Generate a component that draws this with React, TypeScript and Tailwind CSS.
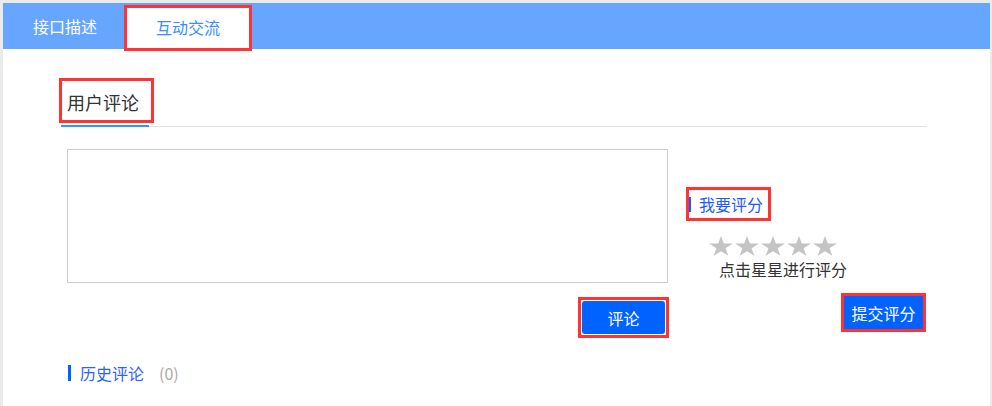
import React from 'react';

const font = { fontFamily: '"Noto Sans CJK SC", "Noto Sans", sans-serif' };

function Star() {
  return (
    <svg width="24" height="20" viewBox="0 0 24 23" preserveAspectRatio="none" className="shrink-0">
      <polygon
        fill="#c4c4c4"
        points="12,0 14.83,8.7 23.98,8.71 16.58,14.09 19.41,22.79 12,17.42 4.59,22.79 7.42,14.09 0.02,8.71 9.17,8.7"
      />
    </svg>
  );
}

export default function App() {
  return (
    <div className="w-[992px] h-[406px] bg-white overflow-hidden" style={font}>
      <div className="h-full border-l-[3px] border-t-[3px] border-r-[2px] border-[#ebebeb]">
        {/* Top tabs */}
        <div className="flex h-[46px] bg-[#66a6ff] overflow-visible">
          <div className="w-[121px] h-full flex items-center pl-[30px] text-[16px] text-white leading-none">
            接口描述
          </div>
          <div className="w-[128px] h-[46px] mt-[2px] bg-white border-[3px] border-[#ff3333] flex items-center justify-center text-[16px] text-[#3a8cff] leading-none">
            <span className="pb-[2px]">互动交流</span>
          </div>
        </div>

        <div className="pl-[58px] pr-[63px] pt-[29px]">
          {/* Section header */}
          <div className="flex border-b border-[#e2e2e2]">
            <div className="relative h-[49px] -mb-px border-b-2 border-[#1e9fff] pl-[6px] pr-[10px] flex items-center text-[18px] text-[#333] leading-6">
              用户评论
              <div className="absolute -left-[2px] -right-[5px] top-0 bottom-[2px] border-[3px] border-[#ff3333]" />
            </div>
          </div>

          <div className="flex mt-[22px]">
            {/* Comment input */}
            <div className="ml-[6px] w-[601px]">
              <div className="h-[134px] border border-[#cccccc] bg-white" />
              <div className="flex justify-end mt-[14px] -mr-px">
                <div className="border-[3px] border-[#ff3333] p-px">
                  <div className="w-[83px] h-[33px] rounded-[3px] bg-[#0063ff] flex items-center justify-center text-[16px] text-white leading-none">
                    评论
                  </div>
                </div>
              </div>
            </div>

            {/* Rating */}
            <div className="ml-[18px] pt-[38px]">
              <div className="w-[85px] h-[34px] border-[3px] border-[#ff3333] flex items-center">
                <div className="w-[2px] h-[15px] bg-[#1e5bff]" />
                <span className="ml-[8px] text-[16px] text-[#1e5bff] leading-none">我要评分</span>
              </div>
              <div className="ml-[23px] mt-[15px] flex gap-[2px]">
                <Star />
                <Star />
                <Star />
                <Star />
                <Star />
              </div>
              <div className="ml-[33px] mt-[3px] text-[16px] leading-5 text-[#333]">点击星星进行评分</div>
              <div className="ml-[155px] mt-[14px] w-[85px] border-[3px] border-[#ff3333]">
                <div className="h-[33px] bg-[#0063ff] flex items-center justify-center text-[16px] text-white leading-none">
                  提交评分
                </div>
              </div>
            </div>
          </div>

          {/* History */}
          <div className="flex items-center ml-[7px] mt-[25px] h-[20px]">
            <div className="w-[3px] h-[16px] bg-[#0063ff]" />
            <span className="ml-[9px] text-[16px] leading-5 text-[#2b62ff]">历史评论</span>
            <span className="ml-[15px] text-[16px] leading-5 text-[#aaaaaa]">(0)</span>
          </div>
        </div>
      </div>
    </div>
  );
}
